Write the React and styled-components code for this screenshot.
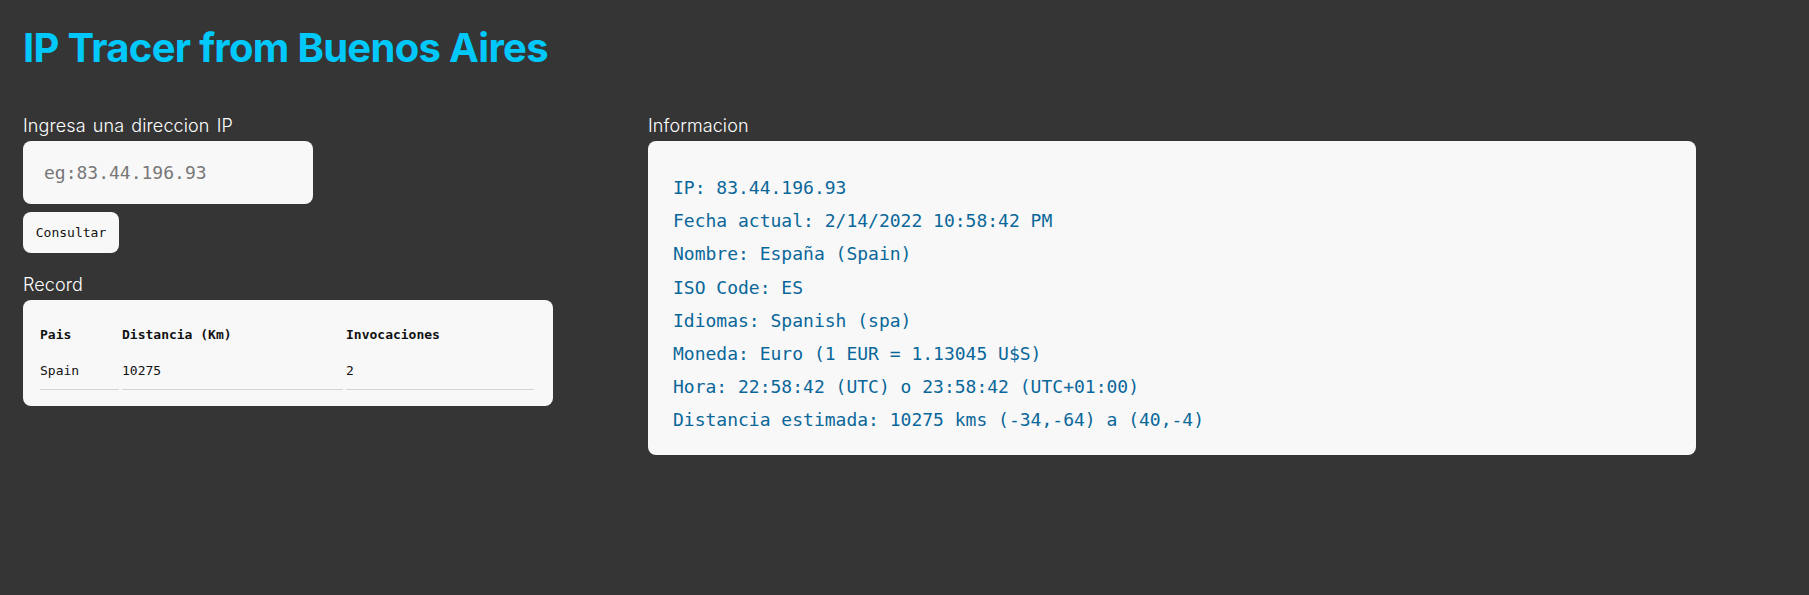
import styled, { createGlobalStyle } from 'styled-components';

const GlobalStyle = createGlobalStyle`
  html, body {
    margin: 0;
    padding: 0;
    background-color: #353535;
    min-height: 100%;
  }
  body {
    font-family: Inter, 'Noto Sans', sans-serif;
  }
  * {
    box-sizing: border-box;
  }
`;

const Page = styled.div`
  min-height: 595px;
  padding: 24px 23px;
  background-color: #353535;
`;

const Title = styled.h1`
  margin: 0;
  font-family: Inter, 'Noto Sans', sans-serif;
  font-weight: 700;
  font-size: 40px;
  line-height: 48px;
  letter-spacing: -0.7px;
  color: #00c8fa;
`;

const Columns = styled.div`
  display: flex;
  align-items: flex-start;
  gap: 95px;
  margin-top: 43px;
`;

const LeftColumn = styled.div`
  width: 530px;
  display: flex;
  flex-direction: column;
  align-items: flex-start;
`;

const RightColumn = styled.div`
  width: 1048px;
  display: flex;
  flex-direction: column;
`;

const Label = styled.div`
  font-family: Inter, 'Noto Sans', sans-serif;
  font-weight: 300;
  font-size: 18px;
  line-height: 22px;
  letter-spacing: 0.1px;
  word-spacing: 2px;
  color: #ffffff;
  margin-top: ${({ $top }) => $top || 0}px;
  margin-bottom: 4px;
`;

const IpInput = styled.input`
  width: 290px;
  height: 63px;
  padding: 0 21px;
  border: none;
  border-radius: 8px;
  background-color: #f8f8f8;
  font-family: 'DejaVu Sans Mono', 'Liberation Mono', monospace;
  font-size: 18px;
  color: #222;
  &::placeholder {
    color: #777777;
  }
  &:focus {
    outline: none;
  }
`;

const Button = styled.button`
  margin-top: 8px;
  width: 96px;
  height: 41px;
  border: none;
  border-radius: 8px;
  background-color: #f8f8f8;
  font-family: 'DejaVu Sans Mono', 'Liberation Mono', monospace;
  font-size: 13px;
  color: #111;
  cursor: pointer;
`;

const Card = styled.div`
  width: 100%;
  background-color: #f8f8f8;
  border-radius: 8px;
`;

const RecordCard = styled(Card)`
  padding: 17px 16px 16px 14px;
`;

const Table = styled.table`
  width: 100%;
  border-collapse: separate;
  border-spacing: 3px 0;
  font-family: 'DejaVu Sans Mono', 'Liberation Mono', monospace;
  font-size: 13px;
  line-height: 16px;
  color: #111;
  text-align: left;
`;

const Th = styled.th`
  padding: 10px 0;
  font-weight: 700;
  width: ${({ $w }) => $w}px;
`;

const Td = styled.td`
  padding: 10px 0;
  border-bottom: 1px solid #d4d4d4;
`;

const InfoCard = styled(Card)`
  height: 314px;
  padding: 30px 25px 18px;
`;

const InfoLine = styled.p`
  margin: 0;
  font-family: 'DejaVu Sans Mono', 'Liberation Mono', monospace;
  font-size: 18px;
  line-height: 33.2px;
  color: #0a679a;
  white-space: pre;
`;

const info = [
  'IP: 83.44.196.93',
  'Fecha actual: 2/14/2022 10:58:42 PM',
  'Nombre: España (Spain)',
  'ISO Code: ES',
  'Idiomas: Spanish (spa)',
  'Moneda: Euro (1 EUR = 1.13045 U$S)',
  'Hora: 22:58:42 (UTC) o 23:58:42 (UTC+01:00)',
  'Distancia estimada: 10275 kms (-34,-64) a (40,-4)',
];

const records = [{ pais: 'Spain', distancia: 10275, invocaciones: 2 }];

const App = () => {
  return (
    <Page>
      <GlobalStyle />
      <Title>IP Tracer from Buenos Aires</Title>
      <Columns>
        <LeftColumn>
          <Label>Ingresa una direccion IP</Label>
          <IpInput type="text" placeholder="eg:83.44.196.93" />
          <Button>Consultar</Button>
          <Label $top={21}>Record</Label>
          <RecordCard>
            <Table>
              <thead>
                <tr>
                  <Th $w={79}>Pais</Th>
                  <Th $w={221}>Distancia (Km)</Th>
                  <Th>Invocaciones</Th>
                </tr>
              </thead>
              <tbody>
                {records.map((r, idx) => (
                  <tr key={idx}>
                    <Td>{r.pais}</Td>
                    <Td>{r.distancia}</Td>
                    <Td>{r.invocaciones}</Td>
                  </tr>
                ))}
              </tbody>
            </Table>
          </RecordCard>
        </LeftColumn>
        <RightColumn>
          <Label>Informacion</Label>
          <InfoCard>
            {info.map((line, idx) => (
              <InfoLine key={idx}>{line}</InfoLine>
            ))}
          </InfoCard>
        </RightColumn>
      </Columns>
    </Page>
  );
};

export default App;
